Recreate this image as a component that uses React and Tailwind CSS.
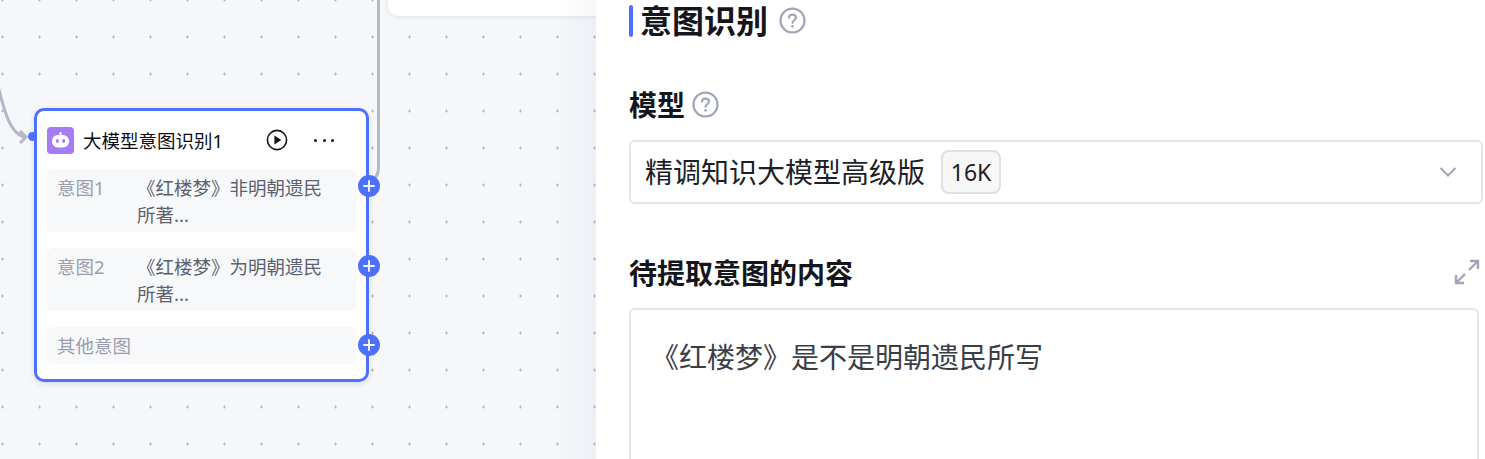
import React from "react";

const font = { fontFamily: '"Noto Sans", "Noto Sans CJK SC", sans-serif' };

function Help({ size }) {
  return (
    <svg width={size} height={size} viewBox="0 0 28 28" fill="none" className="shrink-0 -mt-[2px]">
      <circle cx="14" cy="14" r="12.4" stroke="#a1a5b8" strokeWidth="2.4" />
      <path d="M10.4 11.2c0-2 1.6-3.3 3.6-3.3s3.6 1.3 3.6 3.1c0 2.7-3.6 2.8-3.6 5.4" stroke="#a1a5b8" strokeWidth="2.2" strokeLinecap="round" />
      <circle cx="14" cy="20" r="1.4" fill="#a1a5b8" />
    </svg>
  );
}

function Plus({ className }) {
  return (
    <div className={"absolute left-[321px] w-[22px] h-[22px] rounded-full bg-[#4d71ff] flex items-center justify-center " + className}>
      <svg width="12" height="12" viewBox="0 0 12 12">
        <path d="M6 1v10M1 6h10" stroke="#fff" strokeWidth="1.8" strokeLinecap="round" />
      </svg>
    </div>
  );
}

function Intent({ label, text }) {
  return (
    <div className="flex h-[63px] rounded-md bg-[#f7f8fa] pl-[10px] pr-2 pt-[5px] text-[18.5px] leading-[27px]">
      <div className="w-[80px] shrink-0 text-[#9a9eae]">{label}</div>
      <div className="text-[#5b6270] w-[195px]">{text}</div>
    </div>
  );
}

function Node() {
  return (
    <div className="absolute left-[34px] top-[108px] w-[335px] h-[274px] rounded-[10px] border-[3px] border-[#4d71ff] bg-white shadow-[0_2px_6px_rgba(30,40,80,0.12)]">
      <div className="absolute left-[-9px] top-[21px] w-[9px] h-[9px] rounded-full bg-[#4d71ff]" />
      <div className="flex items-center h-[58px] pl-[10px]">
        <div className="w-[27px] h-[27px] rounded-[4px] bg-[#a47cf3] flex items-center justify-center">
          <svg width="21" height="21" viewBox="0 0 21 21">
            <circle cx="10.5" cy="3.6" r="1.4" fill="#fff" />
            <rect x="2" y="5" width="17" height="12.5" rx="6" fill="#fff" />
            <ellipse cx="7.4" cy="11" rx="1.5" ry="2" fill="#a47cf3" />
            <ellipse cx="13.6" cy="11" rx="1.5" ry="2" fill="#a47cf3" />
          </svg>
        </div>
        <div className="ml-[9px] w-[183px] text-[18.5px] leading-[27px] text-[#0c0e13]">大模型意图识别1</div>
        <svg width="22" height="22" viewBox="0 0 22 22" className="shrink-0">
          <circle cx="11" cy="11" r="9.6" fill="none" stroke="#14161c" strokeWidth="1.6" />
          <path d="M8.4 6.6v8.8l7-4.4z" fill="#14161c" />
        </svg>
        <div className="ml-[26px] flex gap-[5.5px]">
          <span className="w-[3px] h-[3px] rounded-full bg-[#14161c]" />
          <span className="w-[3px] h-[3px] rounded-full bg-[#14161c]" />
          <span className="w-[3px] h-[3px] rounded-full bg-[#14161c]" />
        </div>
      </div>
      <div className="flex flex-col gap-[16px] px-[10px]">
        <Intent label="意图1" text="《红楼梦》非明朝遗民所著..." />
        <Intent label="意图2" text="《红楼梦》为明朝遗民所著..." />
        <div className="h-[37px] rounded-md bg-[#f7f8fa] pl-[10px] text-[18.5px] leading-[37px] text-[#9a9eae]">其他意图</div>
      </div>
      <Plus className="top-[64px]" />
      <Plus className="top-[144px]" />
      <Plus className="top-[223px]" />
    </div>
  );
}

function Canvas() {
  return (
    <div className="relative w-[596px] shrink-0 h-full overflow-hidden bg-[#f6f7fb] bg-[radial-gradient(circle,#b4b7c0_1px,transparent_1.4px)] bg-[length:37px_37px] bg-[position:-16px_18.5px]">
      <div className="absolute left-[388px] top-0 w-[220px] h-[16px] rounded-bl-[10px] bg-white shadow-[0_1px_4px_rgba(30,40,80,0.1)]" />
      <svg className="absolute left-0 top-0" width="596" height="459" fill="none">
        <path d="M-4 78C2 100 8 136 26 137" stroke="#b4b7c4" strokeWidth="3" />
        <path d="M20 131l6 6-6 6" stroke="#b4b7c4" strokeWidth="3" />
        <path d="M378.5 0V168q0 8-6 12" stroke="#b4b7c4" strokeWidth="3" />
      </svg>
      <Node />
      <div className="absolute right-0 top-0 w-[40px] h-full bg-gradient-to-r from-transparent to-[rgba(30,40,80,0.035)]" />
    </div>
  );
}

function Panel() {
  return (
    <div className="flex-1 h-full overflow-hidden bg-white pl-[33px] pr-[2px]">
      <div className="flex items-center h-[34px] mt-[4px]">
        <div className="w-[4px] h-[32px] rounded-sm bg-[#4d71ff]" />
        <div className="ml-[7px] text-[32px] leading-[34px] font-bold text-[#14161c]">意图识别</div>
        <div className="ml-[11px]"><Help size={27} /></div>
      </div>
      <div className="flex items-center h-[36px] mt-[49px]">
        <div className="text-[28px] leading-[36px] font-bold text-[#14161c]">模型</div>
        <div className="ml-[7px]"><Help size={27} /></div>
      </div>
      <div className="mt-[17px] flex items-center h-[64px] rounded-[6px] border-2 border-[#e3e4ea] pl-[14px] pr-[24px]">
        <div className="text-[28px] leading-[38px] text-[#1c1f26]">精调知识大模型高级版</div>
        <div className="ml-[16px] flex items-center justify-center w-[60px] h-[44px] rounded-[8px] border-2 border-[#e0e1e6] bg-[#f7f7f8] text-[23px] text-[#1c1f26]">16K</div>
        <svg width="18" height="10" viewBox="0 0 18 10" fill="none" className="ml-auto">
          <path d="M1.5 1l7.5 7.5L16.5 1" stroke="#a1a5b8" strokeWidth="2" />
        </svg>
      </div>
      <div className="flex items-center justify-between h-[38px] mt-[50px] pr-[3px]">
        <div className="text-[28px] leading-[38px] font-bold text-[#14161c]">待提取意图的内容</div>
        <svg width="26" height="26" viewBox="0 0 26 26" fill="none" className="-mt-[2px]">
          <path d="M15 11L24 2M16 2h8v8M11 15L2 24M2 16v8h8" stroke="#a1a5b8" strokeWidth="2.4" />
        </svg>
      </div>
      <div className="mt-[16px] h-[200px] w-[850px] rounded-[6px] border-2 border-[#e3e4ea] pl-[20px] pt-[25px] text-[28px] leading-[44px] text-[#3a3e47]">
        《红楼梦》是不是明朝遗民所写
      </div>
    </div>
  );
}

export default function App() {
  return (
    <div className="flex w-[1485px] h-[459px] overflow-hidden" style={font}>
      <Canvas />
      <Panel />
    </div>
  );
}
